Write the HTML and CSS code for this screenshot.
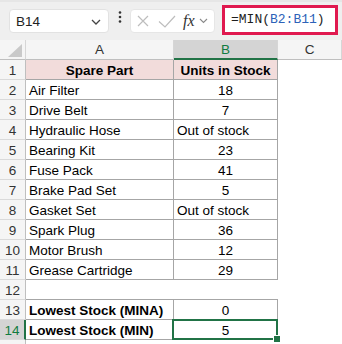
FILE: index.html
```html
<!DOCTYPE html>
<html lang="en">
<head>
	<meta charset="UTF-8">
	<title>MIN with text values</title>
	<link rel="stylesheet" href="styles.css">
</head>
<body>
	<div class="formula-bar">
		<div class="name-box">
			<span>B14</span>
			<svg class="chev" width="10" height="6" viewBox="0 0 10 6"><polyline points="1,1 5,5 9,1" fill="none" stroke="#444" stroke-width="1.3"/></svg>
		</div>
		<svg class="dots" width="4" height="12" viewBox="0 0 4 12"><circle cx="2" cy="1.5" r="1.3" fill="#333"/><circle cx="2" cy="6" r="1.3" fill="#333"/><circle cx="2" cy="10.5" r="1.3" fill="#333"/></svg>
		<div class="fx-box">
			<svg width="12" height="12" viewBox="0 0 12 12"><path d="M1 1 L11 11 M11 1 L1 11" stroke="#bdbdbd" stroke-width="1.2"/></svg>
			<svg width="18" height="13" viewBox="0 0 18 13"><polyline points="1,6.5 7,12 17,1" fill="none" stroke="#bdbdbd" stroke-width="1.2"/></svg>
			<span class="fx">fx</span>
			<svg width="9" height="6" viewBox="0 0 9 6"><polyline points="1,1 4.5,4.5 8,1" fill="none" stroke="#8a8a8a" stroke-width="1.1"/></svg>
		</div>
		<div class="formula-input">=MIN(<span class="ref">B2:B11</span>)</div>
	</div>

	<div class="sheet">
		<div class="hd corner"><svg width="15" height="14" viewBox="0 0 15 14"><polygon points="14,0 14,13 0,13" fill="#c9c9c9"/></svg></div>
		<div class="hd">A</div>
		<div class="hd sel">B</div>
		<div class="hd">C</div>

		<div class="rn">1</div><div class="c hl b mid">Spare Part</div><div class="c hl b mid">Units in Stock</div><div class="e"></div>
		<div class="rn">2</div><div class="c">Air Filter</div><div class="c mid">18</div><div class="e"></div>
		<div class="rn">3</div><div class="c">Drive Belt</div><div class="c mid">7</div><div class="e"></div>
		<div class="rn">4</div><div class="c">Hydraulic Hose</div><div class="c">Out of stock</div><div class="e"></div>
		<div class="rn">5</div><div class="c">Bearing Kit</div><div class="c mid">23</div><div class="e"></div>
		<div class="rn">6</div><div class="c">Fuse Pack</div><div class="c mid">41</div><div class="e"></div>
		<div class="rn">7</div><div class="c">Brake Pad Set</div><div class="c mid">5</div><div class="e"></div>
		<div class="rn">8</div><div class="c">Gasket Set</div><div class="c">Out of stock</div><div class="e"></div>
		<div class="rn">9</div><div class="c">Spark Plug</div><div class="c mid">36</div><div class="e"></div>
		<div class="rn">10</div><div class="c">Motor Brush</div><div class="c mid">12</div><div class="e"></div>
		<div class="rn">11</div><div class="c">Grease Cartridge</div><div class="c mid">29</div><div class="e"></div>
		<div class="rn">12</div><div class="gap"></div><div class="gap"></div><div class="e"></div>
		<div class="rn">13</div><div class="c b">Lowest Stock (MINA)</div><div class="c mid">0</div><div class="e"></div>
		<div class="rn sel">14</div><div class="c b">Lowest Stock (MIN)</div><div class="c mid active">5</div><div class="e"></div>
		<div class="rn"></div><div class="e"></div><div class="e"></div><div class="e"></div>
	</div>
</body>
</html>
```

FILE: styles.css
```css
*{margin:0;padding:0;box-sizing:border-box}
body{
	width:342px;
	height:344px;
	overflow:hidden;
	background:#fff;
	font-family:"Liberation Sans", Arial, sans-serif;
	color:#000;
}

/* formula bar */
.formula-bar{
	height:40px;
	background:#efefef;
	border-top:2px solid #e6e6e6;
	display:flex;
	align-items:flex-start;
	padding-left:9px;
}
.name-box{
	width:100px;
	height:24px;
	margin-top:7px;
	background:#fff;
	border:1px solid #e2e2e2;
	border-radius:4px;
	display:flex;
	align-items:center;
	justify-content:space-between;
	padding:0 7px 0 6px;
	font-size:13.5px;
	color:#222;
}
.name-box .chev{margin-top:1px}
.dots{margin:9px 0 0 9px}
.fx-box{
	width:85px;
	height:24px;
	margin:7px 0 0 8px;
	background:#fff;
	border:1px solid #e6e6e6;
	border-radius:4px;
	display:flex;
	align-items:center;
	padding-left:6px;
	gap:9px;
}
.fx-box .fx{
	font-family:"Liberation Serif", serif;
	font-style:italic;
	font-size:16px;
	color:#333;
	margin-left:-2px;
	margin-right:-5px;
}
.formula-input{
	width:116px;
	height:30px;
	margin:3px 0 0 7px;
	background:#fff;
	border:3px solid #e0194f;
	font-family:"Liberation Mono", monospace;
	font-size:13px;
	line-height:24px;
	padding-left:6px;
	color:#1e1e1e;
}
.formula-input .ref{color:#2d62b8}

/* grid */
.sheet{
	display:grid;
	grid-template-columns:26px 148px 104px 64px;
	grid-auto-rows:20px;
	font-size:13.5px;
}
.hd{
	background:#f5f5f5;
	border-right:1px solid #d6d6d6;
	border-bottom:1px solid #bfbfbf;
	text-align:center;
	line-height:20px;
	color:#333;
}
.hd.sel{
	background:#d4d4d4;
	color:#107c41;
	border-bottom:2px solid #217346;
}
.corner{
	display:flex;
	align-items:flex-end;
	justify-content:flex-end;
	padding:0 2px 1px 0;
}
.rn{
	background:#f5f5f5;
	border-right:1px solid #bfbfbf;
	border-bottom:1px solid #dadada;
	text-align:center;
	line-height:20px;
	padding-top:1px;
	color:#333;
}
.rn.sel{
	background:#d4d4d4;
	color:#107c41;
	border-right:2px solid #217346;
}
.c{
	border-right:1px solid #a6a6a6;
	border-bottom:1px solid #a6a6a6;
	line-height:20px;
	padding:1px 3px 0;
	white-space:nowrap;
}
.gap{border-bottom:1px solid #a6a6a6}
.hl{background:#f2dcdb}
.b{font-weight:bold}
.mid{text-align:center}
.active{position:relative}
.active::before{
	content:"";
	position:absolute;
	top:-1px;
	left:-2px;
	right:-1px;
	bottom:-1px;
	border:2px solid #217346;
}
.active::after{
	content:"";
	position:absolute;
	right:-4px;
	bottom:-4px;
	width:6px;
	height:6px;
	background:#217346;
	border:1px solid #fff;
}
```
